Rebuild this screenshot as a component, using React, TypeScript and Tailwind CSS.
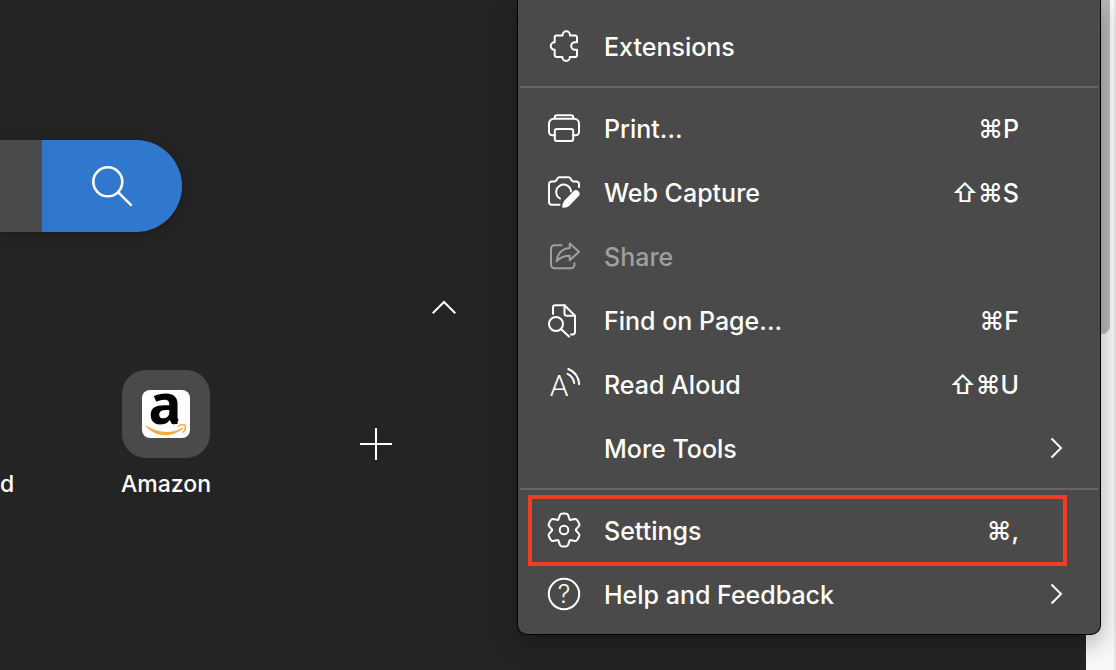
import type { ReactNode } from 'react';

// Point on a circle around the middle of the 36px icon grid, 0deg is up
const polar = (radius: number, deg: number) => {
  const rad = ((deg - 90) * Math.PI) / 180;
  return `${(18 + radius * Math.cos(rad)).toFixed(2)} ${(18 + radius * Math.sin(rad)).toFixed(2)}`;
};

const gearPath =
  [0, 60, 120, 180, 240, 300]
    .map(
      (a, i) =>
        `${i === 0 ? 'M' : 'L'}${polar(12.6, a - 25)} L${polar(15.6, a - 15)} Q${polar(16.4, a - 12)} ${polar(16.4, a - 9)} Q${polar(16.6, a)} ${polar(16.4, a + 9)} Q${polar(16.4, a + 12)} ${polar(15.6, a + 15)} L${polar(12.6, a + 25)} Q${polar(11, a + 30)} ${polar(12.6, a + 35)}`
    )
    .join(' ') + 'Z';

function Icon({ children }: { children?: ReactNode }) {
  return (
    <svg
      viewBox="0 0 36 36"
      className="size-9 shrink-0"
      fill="none"
      stroke="currentColor"
      strokeWidth="2"
      strokeLinecap="round"
      strokeLinejoin="round"
      aria-hidden="true"
    >
      {children}
    </svg>
  );
}

const icons: Record<string, ReactNode> = {
  extensions: (
    <path d="M10.5 7.5h6.1V7a3.7 3.7 0 0 1 7.4 0v.5h5.2A1.8 1.8 0 0 1 31 9.3v4.9h-2a3.8 3.8 0 0 0 0 7.6h2v5.4a1.8 1.8 0 0 1-1.8 1.8h-5.4v.3a3.7 3.7 0 0 1-7.4 0V29h-5.9a1.8 1.8 0 0 1-1.8-1.8v-5.4h-.2a3.75 3.75 0 0 1 0-7.5h.2v-5a1.8 1.8 0 0 1 1.8-1.8z" />
  ),
  print: (
    <>
      <path d="M8.8 25.2H6.2A3.2 3.2 0 0 1 3 22v-8.5a4.7 4.7 0 0 1 4.7-4.7h20.6a4.7 4.7 0 0 1 4.7 4.7V22a3.2 3.2 0 0 1-3.2 3.2h-2.6" />
      <path d="M8.8 8.5V7.2a2 2 0 0 1 2-2h14.4a2 2 0 0 1 2 2v1.3" />
      <rect x="8.8" y="19" width="18.4" height="12" rx="2" />
    </>
  ),
  capture: (
    <>
      <path d="M13.5 30.8H5.7A2.8 2.8 0 0 1 3 28V10.3a2.8 2.8 0 0 1 2.8-2.8h2.7a2 2 0 0 0 1.7-1l1.4-2.3a2 2 0 0 1 1.7-1h9.4a2 2 0 0 1 1.7 1l1.4 2.3a2 2 0 0 0 1.7 1h2.7A2.8 2.8 0 0 1 33 10.3V13" />
      <path d="M14 24.5a7.4 7.4 0 1 1 11-7" />
      <path d="M30 19.8 21.5 28.5" strokeWidth="7" />
      <path
        d="m19 26-2 3q-.7 1-.8 4 0 .8.8.8 3.3-.2 4.3-.9l3-2z"
        fill="currentColor"
        stroke="none"
      />
    </>
  ),
  share: (
    <>
      <path d="M15.5 7.2h-7A3.5 3.5 0 0 0 5 10.7v16a3.5 3.5 0 0 0 3.5 3.5H25a3.5 3.5 0 0 0 3.5-3.5v-1.5" />
      <path d="M23.7 5.5 33 13.7l-9.3 8.6v-4.5c-5.600 0-9.800 1.900-13.100 5.500.9-7.400 5.300-12.900 13.100-13.400z" />
    </>
  ),
  find: (
    <>
      <path d="M7 12V5.5a2.2 2.2 0 0 1 2.2-2.2h9.3L29 13.8v16.4a2.2 2.2 0 0 1-2.2 2.2H25" />
      <path d="M18.5 3.3v8.3a2.2 2.2 0 0 0 2.2 2.2H29" />
      <circle cx="10" cy="22" r="7" />
      <path d="m15.200 27.200 7.800 7.300" />
    </>
  ),
  read: (
    <>
      <text
        x="13"
        y="29.5"
        textAnchor="middle"
        fontFamily="Roboto, sans-serif"
        fontSize="30"
        fontWeight="300"
        fill="currentColor"
        stroke="none"
      >
        A
      </text>
      <path d="M22.3 3c6.3 2.6 10.3 8.3 10.9 15.200" />
      <path d="M21.5 7.8c3.9 1.9 6.2 5.200 6.700 9.200" />
    </>
  ),
  settings: (
    <>
      <path d={gearPath} />
      <circle cx="18" cy="18" r="4.3" />
    </>
  ),
  help: (
    <>
      <circle cx="18" cy="18" r="15.2" />
      <text
        x="18"
        y="27"
        textAnchor="middle"
        fontFamily="Inter, sans-serif"
        fontSize="25"
        fontWeight="300"
        fill="currentColor"
        stroke="none"
      >
        ?
      </text>
    </>
  ),
};

type Item = {
  label: string;
  icon?: string;
  shortcut?: string;
  submenu?: boolean;
  disabled?: boolean;
  highlighted?: boolean;
};

const menuGroups: Item[][] = [
  [{ label: 'Extensions', icon: 'extensions' }],
  [
    { label: 'Print...', icon: 'print', shortcut: '⌘P' },
    { label: 'Web Capture', icon: 'capture', shortcut: '⇧⌘S' },
    { label: 'Share', icon: 'share', disabled: true },
    { label: 'Find on Page...', icon: 'find', shortcut: '⌘F' },
    { label: 'Read Aloud', icon: 'read', shortcut: '⇧⌘U' },
    { label: 'More Tools', submenu: true },
  ],
  [
    { label: 'Settings', icon: 'settings', shortcut: '⌘,', highlighted: true },
    { label: 'Help and Feedback', icon: 'help', submenu: true },
  ],
];

function MenuItem({ item }: { item: Item }) {
  return (
    <button
      type="button"
      role="menuitem"
      disabled={item.disabled}
      className="relative flex h-16 w-full items-center gap-[22px] px-7 text-left disabled:text-[#9f9f9f]"
    >
      <Icon>{item.icon && icons[item.icon]}</Icon>
      <span className="flex-1 pt-0.5">{item.label}</span>
      {item.shortcut && <span className="pt-0.5 pr-[53px]">{item.shortcut}</span>}
      {item.submenu && (
        <svg viewBox="0 0 32 32" className="size-8" fill="none" stroke="currentColor" strokeWidth="2" aria-hidden="true">
          <path d="m11.5 6.5 9.5 9.5-9.5 9.5" />
        </svg>
      )}
      {item.highlighted && (
        <span className="absolute -top-[3px] -bottom-1 left-2.5 right-[33px] border-4 border-[#ee3f26]" />
      )}
    </button>
  );
}

function AppMenu() {
  return (
    <div
      role="menu"
      className="absolute top-0 right-[15px] w-[584px] rounded-b-[10px] border-x border-b border-black bg-[#4a4a4a] pt-3.5 pb-2 text-[25px] leading-8 font-medium text-white shadow-[0_8px_24px_rgba(0,0,0,0.3)]"
    >
      {menuGroups.map((group, i) => (
        <div key={i}>
          {i > 0 && <hr className="mx-0.5 my-2 border-t-2 border-[#666666]" />}
          {group.map((item) => (
            <MenuItem key={item.label} item={item} />
          ))}
        </div>
      ))}
    </div>
  );
}

function AmazonLogo() {
  return (
    <svg viewBox="0 0 48 48" className="size-12 overflow-visible rounded-lg bg-white" aria-hidden="true">
      <text
        x="23"
        y="34"
        textAnchor="middle"
        fontFamily="'Noto Sans', sans-serif"
        fontSize="55"
        fontWeight="700"
        fill="#000"
      >
        a
      </text>
      <path d="m33 25 3.7 5-4.7 4.7-4.7-4.700z" fill="#000" />
      <path d="M4 35.5c12 8 26 8.500 36.200 2.200.8-.4 1.400.5.700 1.100C30 48 14 47.500 3.700 36.300c-.5-.6-.2-1.200.3-.8z" fill="#f4a93a" />
      <path d="M36 36.500c2-2 5.500-2.300 7.300-1.200.4 2-.4 5.200-2.400 7.200" fill="none" stroke="#f4a93a" strokeWidth="1.5" strokeLinejoin="round" />
    </svg>
  );
}

export default function App() {
  return (
    <div className="relative flex min-h-screen overflow-hidden bg-[#242424] font-['Inter','Noto_Sans',sans-serif] text-white">
      <main className="flex-1 pt-[140px]">
        <form
          className="flex h-[92px] w-fit rounded-r-full shadow-[0_2px_8px_rgba(0,0,0,0.25)]"
          onSubmit={(e) => e.preventDefault()}
        >
          <input type="search" aria-label="Search the web" className="w-[42px] bg-[#4a4a4a] outline-none" />
          <button
            type="submit"
            aria-label="Search"
            className="flex w-[140px] items-center justify-center rounded-r-full bg-[#3078ce]"
          >
            <svg viewBox="0 0 42 42" className="size-[42px]" fill="none" stroke="currentColor" strokeWidth="2.6" strokeLinecap="round" aria-hidden="true">
              <circle cx="16.8" cy="16.8" r="14.5" />
              <path d="m27.3 27.3 12.5 12.5" />
            </svg>
          </button>
        </form>

        <div className="mt-16 pl-[432px]">
          <button type="button" aria-label="Hide quick links" className="block">
            <svg viewBox="0 0 24 24" className="size-6" fill="none" stroke="currentColor" strokeWidth="2" aria-hidden="true">
              <path d="M.7 17.200 12 6l11.300 11.200" />
            </svg>
          </button>
        </div>

        <div className="mt-[50px] flex text-[23px] leading-7 font-medium">
          <a href="#" className="w-[61px] pt-[100px]">
            d
          </a>
          <a href="#" className="flex w-[210px] flex-col items-center gap-3">
            <span className="flex size-[88px] items-center justify-center rounded-3xl bg-[#4a4a4a]">
              <AmazonLogo />
            </span>
            Amazon
          </a>
          <button type="button" aria-label="Add site" className="flex h-[148px] w-[210px] items-center justify-center">
            <svg viewBox="0 0 32 32" className="size-8" stroke="currentColor" strokeWidth="2" aria-hidden="true">
              <path d="M16 0v32M0 16h32" />
            </svg>
          </button>
        </div>
      </main>

      {/* page scrollbar */}
      <div className="w-[30px] border-r-2 border-[#e8e8e8] bg-[#f8f8f8] px-1.5">
        <div className="-mr-0.5 h-[334px] w-[18px] rounded-b-lg bg-[#b8b8b8]" />
      </div>

      <AppMenu />
    </div>
  );
}
